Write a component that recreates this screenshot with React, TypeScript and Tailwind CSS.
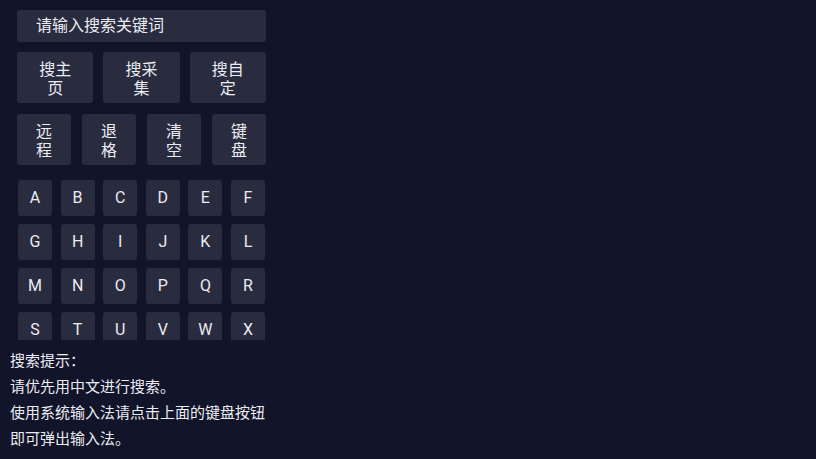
import React from "react";

const letters = "ABCDEFGHIJKLMNOPQRSTUVWX".split("");

export default function App() {
  return (
    <div className="w-[816px] h-[459px] overflow-hidden bg-[#12142a] text-[#ebecf2] font-['Roboto','Noto_Sans_CJK_SC',sans-serif]">
      <div className="w-[283px] px-[17px] pt-[10px]">
        <div className="h-[32px] rounded-[3px] bg-[#292b3f] pl-[19px] flex items-center text-[16px] leading-none">
          请输入搜索关键词
        </div>
        <div className="mt-[10px] grid grid-cols-3 gap-[10px]">
          {["搜主页", "搜采集", "搜自定"].map((t) => (
            <div key={t} className="h-[51px] rounded-[3px] bg-[#292b3f] flex items-center justify-center pt-[3px]">
              <span className="w-[32px] text-center text-[16px] leading-[19px] break-all">{t}</span>
            </div>
          ))}
        </div>
        <div className="mt-[11px] grid grid-cols-4 gap-[11px]">
          {["远程", "退格", "清空", "键盘"].map((t) => (
            <div key={t} className="h-[51px] rounded-[3px] bg-[#292b3f] flex items-center justify-center pt-[3px]">
              <span className="w-[16px] text-center text-[16px] leading-[19px] break-all">{t}</span>
            </div>
          ))}
        </div>
        <div className="mt-[15px] h-[160px] overflow-hidden px-[1px]">
          <div className="grid grid-cols-6 gap-x-[8.6px] gap-y-[8.5px]">
            {letters.map((l) => (
              <div key={l} className="h-[35.5px] rounded-[3px] bg-[#292b3f] flex items-center justify-center text-[16px] leading-none">
                {l}
              </div>
            ))}
          </div>
        </div>
      </div>
      <div className="mt-[7px] pl-[10px] text-[15px] leading-[26px] font-['Noto_Sans_CJK_SC',sans-serif]">
        <div>搜索提示：</div>
        <div>请优先用中文进行搜索。</div>
        <div>使用系统输入法请点击上面的键盘按钮</div>
        <div>即可弹出输入法。</div>
      </div>
    </div>
  );
}
